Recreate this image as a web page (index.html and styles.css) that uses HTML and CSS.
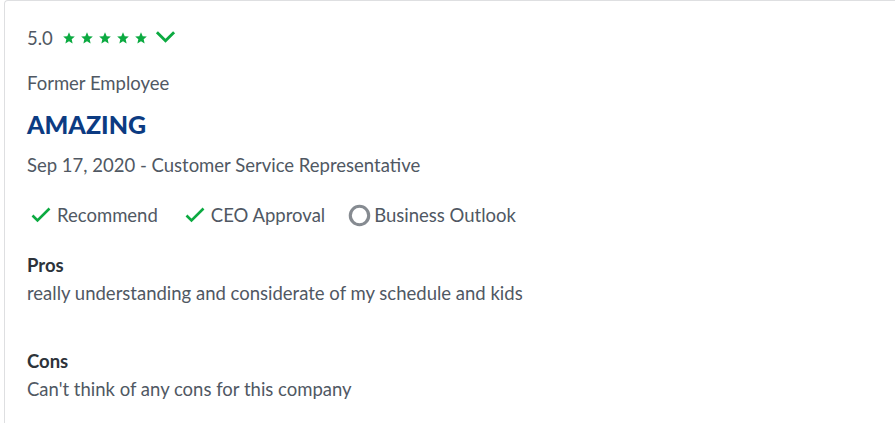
FILE: index.html
```html
<!DOCTYPE html>
<html>
<head>
<meta charset="utf-8">
<link rel="stylesheet" href="styles.css">
</head>
<body>
<div class="card">
  <div class="rating">
    <span class="score">5.0</span>
    <span class="stars">
      <svg viewBox="0 0 24 24" class="star"><path d="M12 2l2.9 6.9 7.1.6-5.4 4.7 1.6 7.1L12 17.6 5.8 21.3l1.6-7.1L2 9.5l7.1-.6z"/></svg>
      <svg viewBox="0 0 24 24" class="star"><path d="M12 2l2.9 6.9 7.1.6-5.4 4.7 1.6 7.1L12 17.6 5.8 21.3l1.6-7.1L2 9.5l7.1-.6z"/></svg>
      <svg viewBox="0 0 24 24" class="star"><path d="M12 2l2.9 6.9 7.1.6-5.4 4.7 1.6 7.1L12 17.6 5.8 21.3l1.6-7.1L2 9.5l7.1-.6z"/></svg>
      <svg viewBox="0 0 24 24" class="star"><path d="M12 2l2.9 6.9 7.1.6-5.4 4.7 1.6 7.1L12 17.6 5.8 21.3l1.6-7.1L2 9.5l7.1-.6z"/></svg>
      <svg viewBox="0 0 24 24" class="star"><path d="M12 2l2.9 6.9 7.1.6-5.4 4.7 1.6 7.1L12 17.6 5.8 21.3l1.6-7.1L2 9.5l7.1-.6z"/></svg>
    </span>
    <svg viewBox="0 0 22 14" class="chevron"><path d="M2 2l9 9 9-9" fill="none" stroke="#0caa41" stroke-width="3"/></svg>
  </div>
  <div class="status">Former Employee</div>
  <h2 class="title">AMAZING</h2>
  <div class="meta">Sep 17, 2020 - Customer Service Representative</div>
  <div class="badges">
    <span class="badge"><svg viewBox="0 0 20 16" class="check"><path d="M1.5 8.5l5 5L18.5 1.5" fill="none" stroke="#0caa41" stroke-width="2.6"/></svg>Recommend</span>
    <span class="badge"><svg viewBox="0 0 20 16" class="check"><path d="M1.5 8.5l5 5L18.5 1.5" fill="none" stroke="#0caa41" stroke-width="2.6"/></svg>CEO Approval</span>
    <span class="badge"><svg viewBox="0 0 22 22" class="ring"><circle cx="11" cy="11" r="8.8" fill="none" stroke="#868b91" stroke-width="3"/></svg>Business Outlook</span>
  </div>
  <div class="section">
    <div class="label">Pros</div>
    <p class="text">really understanding and considerate of my schedule and kids</p>
  </div>
  <div class="section cons">
    <div class="label">Cons</div>
    <p class="text">Can't think of any cons for this company</p>
  </div>
</div>
</body>
</html>
```

FILE: styles.css
```css
html, body {
  margin: 0;
  padding: 0;
  background: #fff;
}
body {
  font-family: Lato, "Open Sans", sans-serif;
  color: #505863;
  padding-left: 4px;
  overflow: hidden;
}
.card {
  border: 1px solid #dedfe1;
  border-right: none;
  border-bottom: none;
  border-top-left-radius: 4px;
  padding: 24px 0 0 22px;
  height: 430px;
  box-sizing: border-box;
}
.rating {
  display: flex;
  align-items: center;
  height: 26px;
}
.score {
  font-size: 18.5px;
  margin-right: 9px;
}
.stars {
  display: flex;
  gap: 4px;
}
.star {
  width: 14px;
  height: 14px;
  fill: #0caa41;
}
.chevron {
  width: 21px;
  height: 14px;
  margin-left: 7px;
  margin-top: -2px;
}
.status {
  font-size: 18.5px;
  margin-top: 19px;
  line-height: 26px;
}
.title {
  margin: 13px 0 0;
  font-size: 25px;
  font-weight: 900;
  color: #0c3b82;
  line-height: 30px;
}
.meta {
  font-size: 18.5px;
  line-height: 26px;
  margin-top: 13px;
}
.badges {
  display: flex;
  gap: 23px;
  margin-top: 24px;
  font-size: 18.5px;
  line-height: 26px;
}
.badge {
  display: flex;
  align-items: center;
}
.check {
  width: 20px;
  height: 16px;
  margin: 0 6px 0 4px;
}
.ring {
  width: 23px;
  height: 23px;
  margin-right: 3px;
}
.section {
  margin-top: 24px;
}
.cons {
  margin-top: 42px;
}
.label {
  font-size: 18.5px;
  font-weight: 700;
  color: #2d333a;
  line-height: 26px;
}
.text {
  margin: 2px 0 0;
  font-size: 18.5px;
  line-height: 26px;
}
```
